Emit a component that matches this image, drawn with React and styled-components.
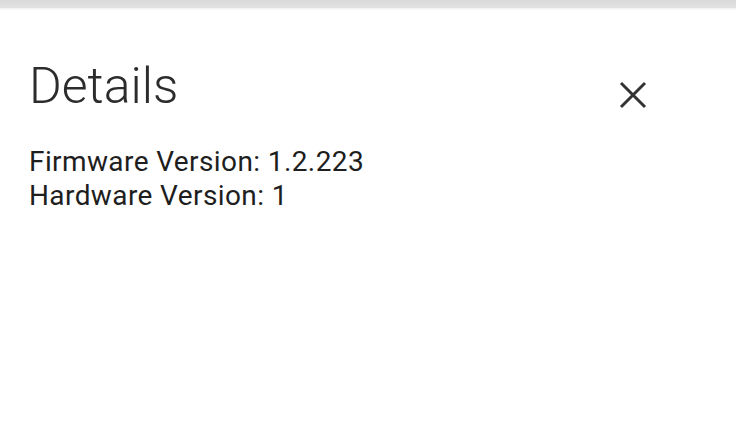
import React from "react";
import styled, { createGlobalStyle } from "styled-components";

const Global = createGlobalStyle`
  html, body { margin: 0; padding: 0; background: #fff; }
  body { font-family: Roboto, "Noto Sans", sans-serif; }
`;

const Page = styled.div`
  width: 736px;
  height: 422px;
  display: flex;
  flex-direction: column;
  background: #fff;
  overflow: hidden;
`;

const TopShade = styled.div`
  height: 8px;
  flex: none;
  background: linear-gradient(#dadada, #e2e2e2);
  box-shadow: 0 1px 2px rgba(0, 0, 0, 0.08);
`;

const Dialog = styled.div`
  padding: 50px 30px 0 29px;
  display: flex;
  flex-direction: column;
`;

const Header = styled.div`
  display: flex;
  justify-content: space-between;
  align-items: flex-start;
`;

const Title = styled.h2`
  margin: 0;
  font-family: Roboto, sans-serif;
  font-weight: 300;
  font-size: 50px;
  line-height: 56px;
  color: #2c2c2c;
`;

const CloseButton = styled.button`
  margin: 22px 58px 0 0;
  padding: 0;
  border: none;
  background: none;
  width: 30px;
  height: 30px;
  display: flex;
  align-items: center;
  justify-content: center;
  cursor: pointer;
`;

const Body = styled.div`
  margin-top: 31px;
  font-family: Roboto, sans-serif;
  font-size: 28px;
  line-height: 34px;
  letter-spacing: 0.4px;
  color: #1e1e1e;
`;

const Line = styled.div``;

export default function App() {
  return (
    <>
      <Global />
      <Page>
        <TopShade />
        <Dialog>
          <Header>
            <Title>Details</Title>
            <CloseButton aria-label="close">
              <svg width="28" height="28" viewBox="0 0 28 28">
                <path d="M2 2 L26 26 M26 2 L2 26" stroke="#333" strokeWidth="3" fill="none" />
              </svg>
            </CloseButton>
          </Header>
          <Body>
            <Line>Firmware Version: 1.2.223</Line>
            <Line>Hardware Version: 1</Line>
          </Body>
        </Dialog>
      </Page>
    </>
  );
}
